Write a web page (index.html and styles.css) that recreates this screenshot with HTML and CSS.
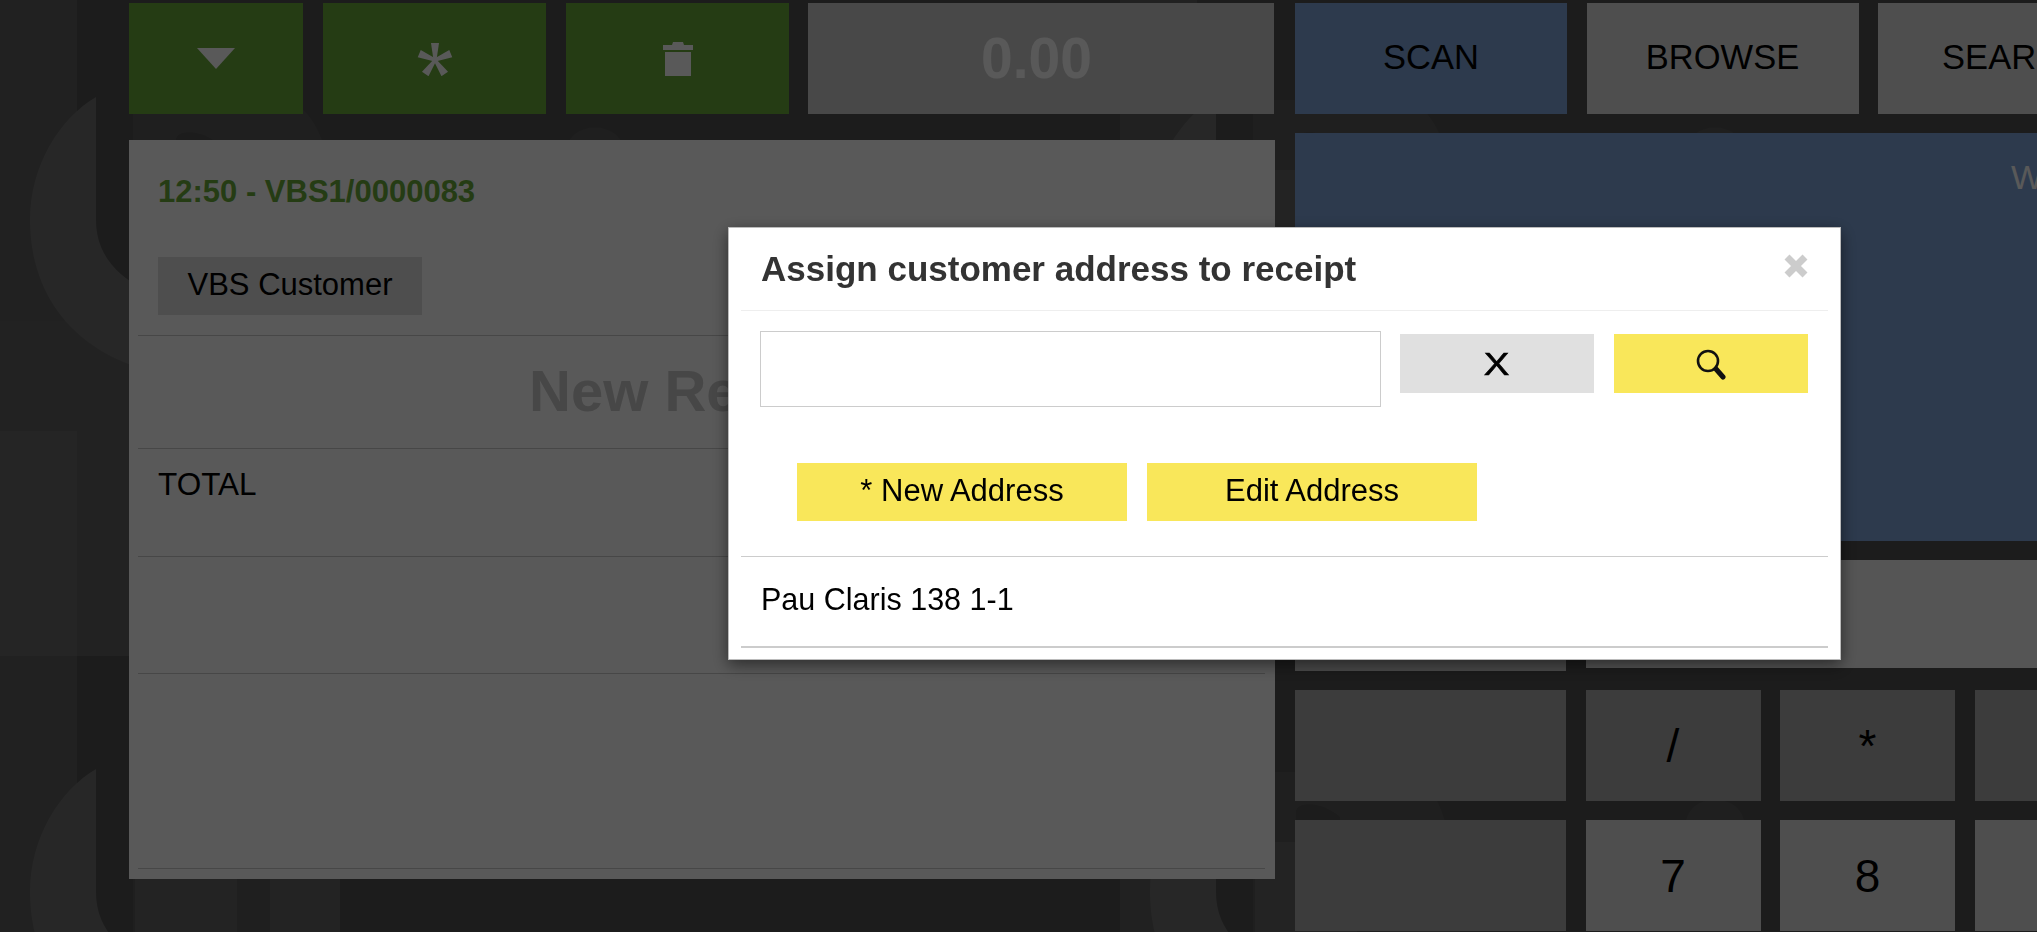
FILE: index.html
```html
<!DOCTYPE html>
<html lang="en">
<head>
  <meta charset="UTF-8">
  <title>Point of Sale</title>
  <link rel="stylesheet" href="styles.css">
</head>
<body>
<!-- Tiled logo wallpaper -->
<svg class="wallpaper" width="2037" height="932" aria-hidden="true">
  <defs>
    <pattern id="tile" width="1120" height="672" patternUnits="userSpaceOnUse">
      <rect x="0" y="0" width="77" height="672" fill="#5e5e5e"/>
      <rect x="0" y="321" width="129" height="335" fill="#636363"/>
      <rect x="0" y="431" width="77" height="225" fill="#6c6c6c"/>
      <path d="M133 100H290C305 108 318 124 325 150L325 300H133Z" fill="#5a5a5a"/>
      <path d="M176 140C176 130 200 128 220 145L220 190H176Z" fill="#505050"/>
      <path d="M566 150C570 120 620 120 624 150L624 200H566Z" fill="#5a5a5a"/>
      <path d="M135 170H237V270C220 320 150 320 135 270Z" fill="#666666"/>
      <path d="M270 170H340V270C335 310 290 320 270 300Z" fill="#666666"/>
      <path d="M96 97V220C96 260 125 285 170 300L170 375C80 360 30 300 30 220C30 165 60 118 96 97Z" fill="#707070"/>
    </pattern>
  </defs>
  <rect width="2037" height="932" fill="#505050"/>
  <rect width="2037" height="932" fill="url(#tile)"/>
</svg>

<div class="shell">
  <div class="left-col">
    <div class="toolbar">
      <button class="tool green narrow">
        <svg width="38" height="21" viewBox="0 0 38 21"><path d="M0 0H38L19 21Z" fill="#fff"/></svg>
      </button>
      <button class="tool green">
        <svg width="36" height="34" viewBox="-18 -18 36 34">
          <g fill="#fff">
            <path d="M-1.5 0L-4 -17H4L1.5 0Z"/>
            <path d="M-1.5 0L-4 -17H4L1.5 0Z" transform="rotate(68)"/>
            <path d="M-1.5 0L-4 -17H4L1.5 0Z" transform="rotate(-68)"/>
            <path d="M-1.5 0L-4 -17H4L1.5 0Z" transform="rotate(145)"/>
            <path d="M-1.5 0L-4 -17H4L1.5 0Z" transform="rotate(-145)"/>
          </g>
        </svg>
      </button>
      <button class="tool green">
        <svg width="30" height="34" viewBox="0 0 30 34">
          <path d="M10 0H20L21 3H30V8H0V3H9Z" fill="#fff"/>
          <path d="M2 10H28V34H2Z" fill="#fff"/>
        </svg>
      </button>
      <div class="tool total-box">0.00</div>
    </div>

    <div class="ticket">
      <div class="ticket-row head-row">
        <div class="ticket-title">12:50 - VBS1/0000083</div>
        <button class="customer-btn">VBS Customer</button>
      </div>
      <div class="ticket-row empty-row">New Receipt</div>
      <div class="ticket-row total-row">TOTAL</div>
      <div class="ticket-row spacer-one"></div>
      <div class="ticket-row spacer-two"></div>
    </div>
  </div>

  <div class="right-col">
    <div class="tabs">
      <button class="tab blue">SCAN</button>
      <button class="tab">BROWSE</button>
      <button class="tab">SEARCH</button>
    </div>
    <div class="scan-panel">W</div>
    <div class="keypad">
      <div class="key wide"></div>
      <div class="key pale span-three"></div>
      <div class="key dim"></div>
      <div class="key dim">/</div>
      <div class="key dim">*</div>
      <div class="key dim"></div>
      <div class="key dim"></div>
      <div class="key">7</div>
      <div class="key">8</div>
      <div class="key"></div>
    </div>
  </div>
</div>

<!-- Modal -->
<div class="backdrop">
  <div class="modal">
    <div class="modal-header">
      <h3>Assign customer address to receipt</h3>
      <svg class="close-icon" width="24" height="24" viewBox="0 0 24 24">
        <path d="M3 3L21 21M21 3L3 21" stroke="#ccc" stroke-width="7"/>
      </svg>
    </div>
    <div class="search-row">
      <input class="search-input" type="text">
      <button class="modal-btn grey"><span class="clear-x">X</span></button>
      <button class="modal-btn yellow">
        <svg class="search-icon" width="30" height="32" viewBox="0 0 30 32">
          <circle cx="12" cy="12" r="10" fill="none" stroke="#111" stroke-width="2.6"/>
          <path d="M20 20L27 28" stroke="#111" stroke-width="5" stroke-linecap="round"/>
        </svg>
      </button>
    </div>
    <div class="action-row">
      <button class="action-btn">* New Address</button>
      <button class="action-btn">Edit Address</button>
    </div>
    <div class="address-row">Pau Claris 138 1-1</div>
  </div>
</div>
</body>
</html>
```

FILE: styles.css
```css
html, body {
  margin: 0;
  padding: 0;
  height: 100%;
  overflow: hidden;
}

body {
  font-family: "Liberation Sans", Arial, sans-serif;
  color: #000;
  position: relative;
}

button {
  font-family: inherit;
  border: none;
  padding: 0;
  color: #000;
}

.wallpaper {
  position: absolute;
  top: 0;
  left: 0;
  z-index: -1;
}

.shell {
  display: flex;
  gap: 20px;
  width: 2149px;
  padding: 3px 0 0 129px;
  box-sizing: border-box;
}

/* Left column */
.left-col {
  flex: none;
  width: 1146px;
}

.toolbar {
  display: flex;
  gap: 20px;
  height: 111px;
}

.tool {
  flex: none;
  width: 223px;
  display: flex;
  align-items: center;
  justify-content: center;
}

.tool.narrow {
  width: 174px;
}

.green {
  background: #6aac3a;
}

.total-box {
  width: 466px;
  margin-left: -1px;
  padding: 0 9px 2px 0;
  box-sizing: border-box;
  background: #cfcfcf;
  color: #fff;
  font-size: 57px;
  font-weight: bold;
}

.ticket {
  margin-top: 26px;
  height: 739px;
  padding: 0 10px 0 9px;
  background: #fff;
  box-sizing: border-box;
}

.ticket-row {
  border-bottom: 1px solid #ccc;
  box-sizing: border-box;
  padding: 0 20px;
}

.head-row {
  height: 196px;
  padding-top: 29px;
}

.ticket-title {
  color: #6aac3a;
  font-size: 31px;
  font-weight: bold;
  line-height: 46px;
}

.customer-btn {
  display: block;
  width: 264px;
  height: 58px;
  margin-top: 42px;
  padding-bottom: 2px;
  background: #e0e0e0;
  font-size: 31px;
}

.empty-row {
  height: 113px;
  padding-top: 20px;
  color: #ccc;
  font-size: 58px;
  font-weight: bold;
  line-height: 70px;
  text-align: center;
}

.total-row {
  height: 108px;
  padding-top: 17px;
  font-size: 31.5px;
  line-height: 36px;
}

.spacer-one {
  height: 117px;
}

.spacer-two {
  height: 195px;
}

/* Right column */
.right-col {
  flex: none;
  width: 854px;
}

.tabs {
  display: flex;
  gap: 19.5px;
  height: 111px;
}

.tab {
  flex: none;
  width: 272px;
  padding-bottom: 2px;
  background: #e0e0e0;
  font-size: 34.5px;
}

.blue {
  background: #80a6dc;
}

.scan-panel {
  height: 408px;
  margin-top: 19px;
  padding: 24px 0 0 716px;
  box-sizing: border-box;
  background: #80a6dc;
  color: #fff;
  font-size: 34px;
  line-height: 40px;
}

.keypad {
  display: grid;
  grid-template-columns: 271px repeat(3, 175px);
  grid-auto-rows: 111px;
  column-gap: 19.5px;
  row-gap: 19px;
  margin-top: 19px;
}

.key {
  display: flex;
  align-items: center;
  justify-content: center;
  background: #e0e0e0;
  font-size: 46px;
}

.key.dim {
  background: #acacac;
}

.key.wide {
  background: #d4d4d4;
}

.key.pale {
  height: 108px;
  background: #f2f2f2;
}

.span-three {
  grid-column: span 3;
}

/* Modal */
.backdrop {
  position: fixed;
  top: 0;
  left: 0;
  right: 0;
  bottom: 0;
  background: rgba(0, 0, 0, 0.65);
}

.modal {
  position: absolute;
  top: 227px;
  left: 728px;
  width: 1113px;
  height: 433px;
  padding: 0 12px;
  box-sizing: border-box;
  background: #fff;
  border: 1px solid #bbb;
  box-shadow: 0 5px 15px rgba(0, 0, 0, 0.5);
}

.modal-header {
  display: flex;
  align-items: center;
  justify-content: space-between;
  height: 83px;
  padding: 0 20px 6px 20px;
  box-sizing: border-box;
  border-bottom: 1px solid #eee;
}

.modal-header h3 {
  margin: 6px 0 0;
  color: #333;
  font-size: 35px;
  font-weight: bold;
}

.close-icon {
  flex: none;
}

.search-row {
  display: flex;
  align-items: flex-start;
  padding: 20px 20px 0 19px;
}

.search-input {
  flex: none;
  width: 621px;
  height: 76px;
  margin: 0;
  padding: 0;
  box-sizing: border-box;
  border: 1px solid #ccc;
  background: #fff;
}

.modal-btn {
  flex: none;
  display: flex;
  align-items: center;
  justify-content: center;
  width: 194px;
  height: 59px;
  margin: 3px 0 0 19px;
}

.modal-btn + .modal-btn {
  margin-left: 20px;
}

.grey {
  background: #e0e0e0;
}

.yellow {
  background: #f9e75a;
}

.clear-x {
  display: inline-block;
  padding-top: 2px;
  font-size: 32px;
  -webkit-text-stroke: 0.6px #000;
  transform: scaleX(1.2);
}

.search-icon {
  margin-top: 3px;
}

.action-row {
  display: flex;
  gap: 20px;
  height: 150px;
  padding: 56px 0 0 56px;
  box-sizing: border-box;
  border-bottom: 1px solid #ccc;
}

.action-btn {
  flex: none;
  width: 330px;
  height: 58px;
  padding-bottom: 3px;
  background: #f9e75a;
  font-size: 31px;
}

.address-row {
  height: 91px;
  padding: 24px 0 0 20px;
  box-sizing: border-box;
  border-bottom: 2px solid #ccc;
  font-size: 30.5px;
  line-height: 36px;
}
```
